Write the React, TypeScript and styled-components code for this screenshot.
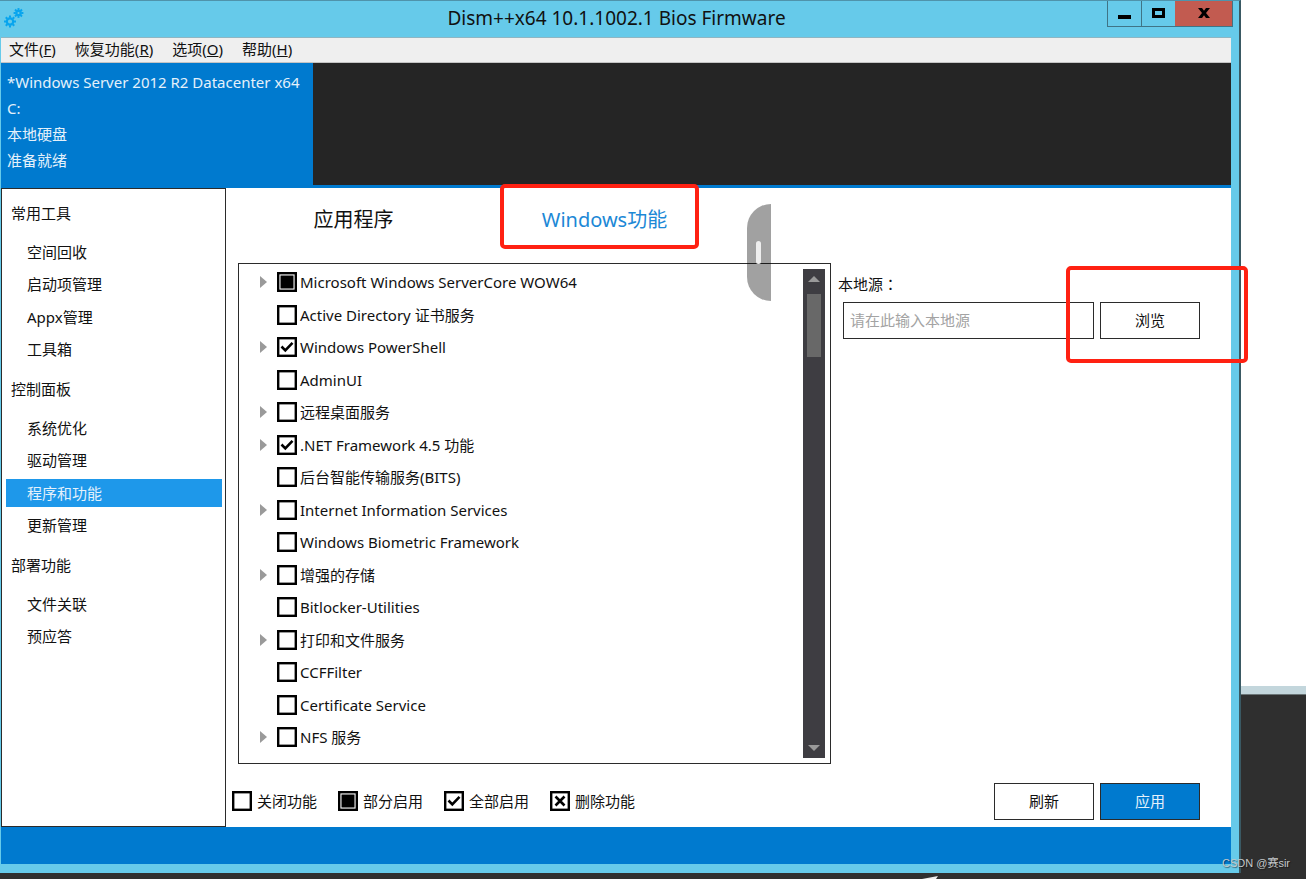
import React, { useState } from "react";
import styled, { createGlobalStyle } from "styled-components";

const color = {
  frame: "#66caea",
  blue: "#007acf",
  selected: "#1e98ea",
  dark: "#252525",
  desktop: "#2f2f2f",
  line: "#2b2b2b",
  mark: "#ff2112",
};

const GlobalStyle = createGlobalStyle`
  *, *::before, *::after { box-sizing: border-box; }
  body {
    margin: 0;
    background: ${color.desktop};
    color: #111;
    font: 15px/24px "Noto Sans", "Noto Sans CJK SC", sans-serif;
  }
  button, input { font: inherit; color: inherit; }
  ul { list-style: none; margin: 0; padding: 0; }
`;

const Desktop = styled.div`
  position: relative;
  display: grid;
  grid-template-columns: minmax(0, 1fr) 65px;
  min-height: 100vh;
  padding-bottom: 6px;
  overflow: hidden;
`;

const Backdrop = styled.div`
  display: flex;
  flex-direction: column;
`;

const BackdropPage = styled.div`
  flex: 1;
  background: #fff;
`;

const BackdropEdge = styled.div`
  height: 9px;
  background: #c3d6dc;
  border-bottom: 1px solid #6b7577;
`;

const BackdropFloor = styled.div`
  height: 178px;
`;

const Window = styled.main`
  display: flex;
  flex-direction: column;
  background: ${color.frame};
  border-top: 1px solid #4f93ab;
  border-right: 2px solid #3a5963;
`;

const TitleBar = styled.header`
  display: grid;
  grid-template-columns: 126px 1fr 126px;
  height: 36px;
  padding-right: 6px;
`;

const AppIcon = styled.svg`
  width: 24px;
  height: 24px;
  margin: 4px 0 0 1px;
`;

const Title = styled.h1`
  margin: 0;
  font-size: 19px;
  font-weight: 400;
  line-height: 34px;
  text-align: center;
  white-space: nowrap;
`;

const WindowButtons = styled.div`
  display: flex;
  height: 26px;
  border: 1px solid #3f7486;
  border-top: 0;
`;

const WindowButton = styled.button<{ $close?: boolean }>`
  flex: ${(p) => (p.$close ? "0 0 57px" : "1")};
  display: flex;
  align-items: center;
  justify-content: center;
  padding: 0 0 2px;
  border: 0;
  border-left: ${(p) => (p.$close ? "0" : "1px solid #3f7486")};
  background: ${(p) => (p.$close ? "#c25b50" : "transparent")};
  &:first-child { border-left: 0; }
`;

const Client = styled.div`
  flex: 1;
  display: flex;
  flex-direction: column;
  margin: 0 8px 9px 1px;
  border-top: 1px solid #8fb6c3;
`;

const MenuBar = styled.nav`
  display: flex;
  gap: 19px;
  height: 25px;
  padding-left: 8px;
  background: #efefef;
  border-bottom: 1px solid #c4c4c4;
`;

const MenuItem = styled.button`
  padding: 0 0 2px;
  border: 0;
  background: none;
  line-height: 22px;
  white-space: nowrap;
`;

const Banner = styled.section`
  display: flex;
  height: 125px;
  background: ${color.dark};
  border-bottom: 3px solid ${color.blue};
`;

const SystemCard = styled.div`
  min-width: 312px;
  padding: 6px 4px 0 6px;
  background: ${color.blue};
  color: #e4f1fb;
  line-height: 26px;
  white-space: nowrap;
`;

const Body = styled.div`
  flex: 1;
  display: flex;
  background: #fff;
`;

const Sidebar = styled.nav`
  flex: 0 0 225px;
  padding: 10px 3px 0 4px;
  border: 1px solid ${color.line};
`;

const GroupTitle = styled.h2`
  margin: 0 0 11px;
  padding-left: 5px;
  font-size: 15px;
  font-weight: 400;
  line-height: 28px;
`;

const GroupList = styled.ul<{ $tall: boolean }>`
  display: flex;
  flex-direction: column;
  justify-content: space-between;
  height: ${(p) => (p.$tall ? "125px" : "60px")};
  margin-bottom: 12px;
`;

const SideLink = styled.a<{ $active: boolean }>`
  display: block;
  padding-left: 21px;
  background: ${(p) => (p.$active ? color.selected : "transparent")};
  color: ${(p) => (p.$active ? "#e4f1fb" : "inherit")};
  line-height: 28px;
  text-decoration: none;
`;

const Content = styled.section`
  flex: 1;
  display: flex;
  flex-direction: column;
  min-width: 0;
  padding: 0 31px 0 12px;
`;

const Tabs = styled.div`
  position: relative;
  display: flex;
  height: 75px;
  padding-bottom: 12px;
  margin-left: -10px;
`;

const Tab = styled.button<{ $active: boolean }>`
  position: relative;
  flex: 0 0 251px;
  padding: 0;
  border: 0;
  background: none;
  color: ${(p) => (p.$active ? "#1c88d6" : "inherit")};
  font-size: 20px;
  line-height: 28px;
`;

const TabMark = styled.span`
  position: absolute;
  inset: -4px 31px 2px 21px;
  border: 4px solid ${color.mark};
  border-radius: 5px;
`;

const DragHandle = styled.span`
  position: absolute;
  top: 16px;
  left: 519px;
  z-index: 1;
  width: 24px;
  height: 97px;
  background: rgba(0, 0, 0, 0.37);
  border-radius: 24px 0 0 24px;
  &::after {
    content: "";
    position: absolute;
    top: 37px;
    left: 9px;
    width: 5px;
    height: 23px;
    border-radius: 3px;
    background: #eee;
  }
`;

const Columns = styled.div`
  flex: 1;
  display: grid;
  grid-template-columns: minmax(0, 1fr) 362px;
  gap: 7px;
`;

const FeaturePanel = styled.div`
  display: flex;
  border: 1px solid ${color.line};
`;

const FeatureTree = styled.ul`
  flex: 1;
  display: flex;
  flex-direction: column;
  justify-content: space-between;
  && { padding: 6px 0 14px 18px; }
`;

const FeatureRow = styled.li`
  display: flex;
  align-items: center;
  height: 24px;
`;

const Expander = styled.button<{ $hidden: boolean }>`
  display: flex;
  width: 20px;
  padding: 0 0 0 3px;
  border: 0;
  background: none;
  visibility: ${(p) => (p.$hidden ? "hidden" : "visible")};
`;

const CheckLabel = styled.label<{ $gap: number }>`
  display: flex;
  align-items: center;
  gap: ${(p) => p.$gap}px;
  white-space: nowrap;
`;

const CheckBox = styled.span`
  position: relative;
  display: flex;
  width: 20px;
  height: 20px;
`;

const CheckInput = styled.input`
  appearance: none;
  width: 20px;
  height: 20px;
  margin: 0;
  border: 2px solid #000;
  background: #fff;
`;

const CheckGlyph = styled.svg`
  position: absolute;
  inset: 0;
  pointer-events: none;
`;

const ScrollBar = styled.div`
  display: flex;
  flex-direction: column;
  align-items: center;
  width: 22px;
  margin: 5px;
  background: #3e3d42;
`;

const ScrollButton = styled.button`
  display: flex;
  align-items: center;
  justify-content: center;
  width: 22px;
  height: 20px;
  padding: 0;
  border: 0;
  background: none;
`;

const ScrollTrack = styled.div`
  flex: 1;
  padding-top: 5px;
`;

const ScrollThumb = styled.div`
  width: 14px;
  height: 63px;
  background: #686868;
`;

const SourceColumn = styled.div`
  position: relative;
  padding-top: 9px;
`;

const SourceLabel = styled.label`
  display: block;
  margin-bottom: 6px;
  font-family: "Noto Sans", "Noto Sans CJK TC", sans-serif;
`;

const SourceRow = styled.div`
  display: flex;
  gap: 6px;
  padding-left: 5px;
`;

const SourceInput = styled.input`
  flex: 1;
  min-width: 0;
  height: 37px;
  padding: 0 6px 2px;
  border: 1px solid ${color.line};
  background: #fff;
  &::placeholder { color: #a3a3a3; opacity: 1; }
`;

const ActionButton = styled.button<{ $primary?: boolean }>`
  flex: 0 0 100px;
  height: 37px;
  padding: 0 0 2px;
  border: 1px solid ${color.line};
  background: ${(p) => (p.$primary ? color.blue : "#fff")};
  color: ${(p) => (p.$primary ? "#e4f1fb" : "inherit")};
`;

const SourceMark = styled.span`
  position: absolute;
  top: 3px;
  right: -48px;
  width: 182px;
  height: 97px;
  border: 4px solid ${color.mark};
  border-radius: 5px;
  pointer-events: none;
`;

const ActionBar = styled.div`
  display: flex;
  align-items: center;
  justify-content: space-between;
  margin-left: -6px;
  padding: 19px 0 7px;
`;

const Legend = styled.div`
  display: flex;
  gap: 21px;
  padding-bottom: 2px;
`;

const Actions = styled.div`
  display: flex;
  gap: 6px;
`;

const StatusBar = styled.footer`
  height: 37px;
  background: ${color.blue};
`;

const Watermark = styled.span`
  position: absolute;
  right: 16px;
  bottom: 7px;
  color: #c4c8ca;
  font: 11px/18px "Liberation Sans", "Noto Sans CJK SC", sans-serif;
  text-shadow: 1px 1px 1px rgba(0, 0, 0, 0.5);
`;

const Cursor = styled.svg`
  position: absolute;
  left: 922px;
  bottom: 0;
`;

type State = "off" | "partial" | "on" | "remove";

function Check({ state, label, gap }: { state: State; label: string; gap: number }) {
  const [value, setValue] = useState<State>(state);
  return (
    <CheckLabel $gap={gap}>
      <CheckBox>
        <CheckInput
          type="checkbox"
          checked={value !== "off"}
          onChange={(e) => setValue(e.target.checked ? "on" : "off")}
        />
        <CheckGlyph width="20" height="20" viewBox="0 0 20 20" fill="none">
          <rect x="1.2" y="1.2" width="17.6" height="17.6" stroke="#000" strokeWidth="2.4" />
          {value === "partial" && <rect x="3.5" y="3.5" width="13" height="13" fill="#000" />}
          {value === "on" && <path d="M4.5 9.5 8.3 13.3 15.5 5.8" stroke="#000" strokeWidth="2.6" />}
          {value === "remove" && <path d="M5.5 5.5 14.5 14.5M14.5 5.5 5.5 14.5" stroke="#000" strokeWidth="2.6" />}
        </CheckGlyph>
      </CheckBox>
      {label}
    </CheckLabel>
  );
}

const teeth = [0, 45, 90, 135, 180, 225, 270, 315];

function Gear({ x, y, r }: { x: number; y: number; r: number }) {
  return (
    <g transform={`translate(${x} ${y})`} stroke="#08a5ee">
      <circle r={r - 2.2} fill="none" strokeWidth="2.2" />
      {teeth.map((t) => (
        <path key={t} d={`M0 ${-(r - 1.6)}V${-r - 0.6}`} strokeWidth="2" transform={`rotate(${t})`} />
      ))}
    </g>
  );
}

const menus = [
  ["文件", "F"],
  ["恢复功能", "R"],
  ["选项", "O"],
  ["帮助", "H"],
];

const groups = [
  { title: "常用工具", items: ["空间回收", "启动项管理", "Appx管理", "工具箱"] },
  { title: "控制面板", items: ["系统优化", "驱动管理", "程序和功能", "更新管理"] },
  { title: "部署功能", items: ["文件关联", "预应答"] },
];

const features: { name: string; state: State; parent: boolean }[] = [
  { name: "Microsoft Windows ServerCore WOW64", state: "partial", parent: true },
  { name: "Active Directory 证书服务", state: "off", parent: false },
  { name: "Windows PowerShell", state: "on", parent: true },
  { name: "AdminUI", state: "off", parent: false },
  { name: "远程桌面服务", state: "off", parent: true },
  { name: ".NET Framework 4.5 功能", state: "on", parent: true },
  { name: "后台智能传输服务(BITS)", state: "off", parent: false },
  { name: "Internet Information Services", state: "off", parent: true },
  { name: "Windows Biometric Framework", state: "off", parent: false },
  { name: "增强的存储", state: "off", parent: true },
  { name: "Bitlocker-Utilities", state: "off", parent: false },
  { name: "打印和文件服务", state: "off", parent: true },
  { name: "CCFFilter", state: "off", parent: false },
  { name: "Certificate Service", state: "off", parent: false },
  { name: "NFS 服务", state: "off", parent: true },
];

export default function App() {
  const [page, setPage] = useState("程序和功能");
  return (
    <Desktop>
      <GlobalStyle />
      <Window>
        <TitleBar>
          <AppIcon viewBox="0 0 24 24">
            <Gear x={9} y={16.5} r={5.4} />
            <Gear x={17.5} y={8} r={4.3} />
          </AppIcon>
          <Title>Dism++x64 10.1.1002.1 Bios Firmware</Title>
          <WindowButtons>
            <WindowButton aria-label="最小化">
              <svg width="13" height="18"><rect y="11" width="13" height="4" /></svg>
            </WindowButton>
            <WindowButton aria-label="最大化">
              <svg width="13" height="10"><rect x="1.5" y="1.5" width="10" height="7" fill="none" stroke="#000" strokeWidth="3" /></svg>
            </WindowButton>
            <WindowButton $close aria-label="关闭">
              <svg width="12" height="10" viewBox="0 0 12 10"><path d="M0 0H4L6 2.8 8 0H12L8 5 12 10H8L6 7.2 4 10H0L4 5Z" /></svg>
            </WindowButton>
          </WindowButtons>
        </TitleBar>
        <Client>
          <MenuBar>
            {menus.map(([name, key]) => (
              <MenuItem key={key}>{name}(<u>{key}</u>)</MenuItem>
            ))}
          </MenuBar>
          <Banner>
            <SystemCard>
              <div>*Windows Server 2012 R2 Datacenter x64</div>
              <div>C:</div>
              <div>本地硬盘</div>
              <div>准备就绪</div>
            </SystemCard>
          </Banner>
          <Body>
            <Sidebar>
              {groups.map((g) => (
                <section key={g.title}>
                  <GroupTitle>{g.title}</GroupTitle>
                  <GroupList $tall={g.items.length > 2}>
                    {g.items.map((item) => (
                      <li key={item}>
                        <SideLink href="#" $active={item === page} onClick={() => setPage(item)}>{item}</SideLink>
                      </li>
                    ))}
                  </GroupList>
                </section>
              ))}
            </Sidebar>
            <Content>
              <Tabs>
                <Tab $active={false}>应用程序</Tab>
                <Tab $active>Windows功能<TabMark /></Tab>
                <DragHandle />
              </Tabs>
              <Columns>
                <FeaturePanel>
                  <FeatureTree>
                    {features.map((f) => (
                      <FeatureRow key={f.name}>
                        <Expander $hidden={!f.parent} aria-label="展开">
                          <svg width="7" height="12"><path d="M0 0 7 6 0 12Z" fill="#9a9a9a" /></svg>
                        </Expander>
                        <Check state={f.state} label={f.name} gap={3} />
                      </FeatureRow>
                    ))}
                  </FeatureTree>
                  <ScrollBar>
                    <ScrollButton aria-label="向上">
                      <svg width="12" height="6"><path d="M0 6 6 0 12 6Z" fill="#999" /></svg>
                    </ScrollButton>
                    <ScrollTrack><ScrollThumb /></ScrollTrack>
                    <ScrollButton aria-label="向下">
                      <svg width="12" height="6"><path d="M0 0 6 6 12 0Z" fill="#999" /></svg>
                    </ScrollButton>
                  </ScrollBar>
                </FeaturePanel>
                <SourceColumn>
                  <SourceLabel htmlFor="source">本地源：</SourceLabel>
                  <SourceRow>
                    <SourceInput id="source" type="text" placeholder="请在此输入本地源" />
                    <ActionButton>浏览</ActionButton>
                  </SourceRow>
                  <SourceMark />
                </SourceColumn>
              </Columns>
              <ActionBar>
                <Legend>
                  <Check state="off" label="关闭功能" gap={5} />
                  <Check state="partial" label="部分启用" gap={5} />
                  <Check state="on" label="全部启用" gap={5} />
                  <Check state="remove" label="删除功能" gap={5} />
                </Legend>
                <Actions>
                  <ActionButton>刷新</ActionButton>
                  <ActionButton $primary>应用</ActionButton>
                </Actions>
              </ActionBar>
            </Content>
          </Body>
          <StatusBar />
        </Client>
      </Window>
      <Backdrop>
        <BackdropPage />
        <BackdropEdge />
        <BackdropFloor />
      </Backdrop>
      <Cursor width="16" height="3"><path d="M0 3 16 0 14 3Z" fill="#eee" /></Cursor>
      <Watermark>CSDN @赛sir</Watermark>
    </Desktop>
  );
}
